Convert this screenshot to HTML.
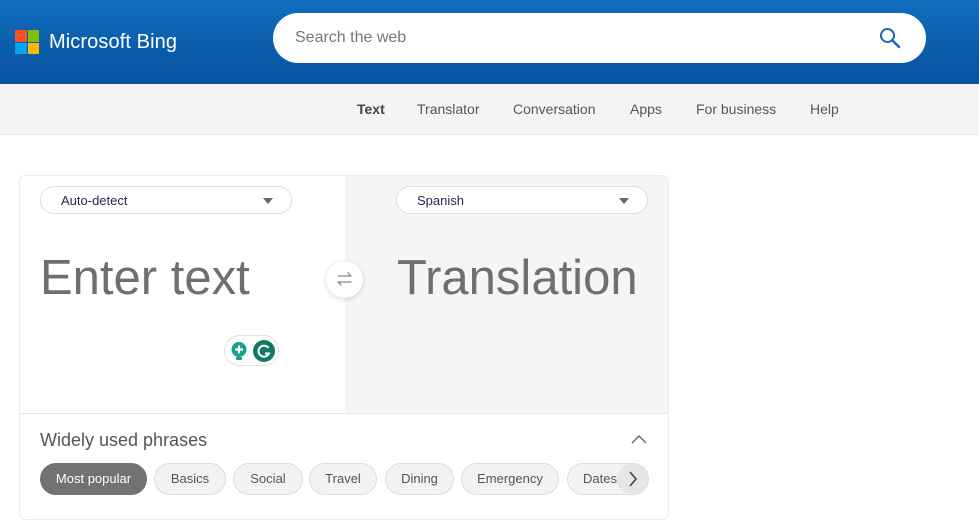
<!DOCTYPE html>
<html><head><style>
*{margin:0;padding:0;box-sizing:border-box}
body{width:979px;height:514px;overflow:hidden;background:#fff;font-family:"Liberation Sans",Arial,sans-serif;position:relative}
.hdr{position:absolute;left:0;top:0;width:979px;height:84px;background:linear-gradient(#106ebe,#0a5aa8 70%,#0553a0)}
.logo{position:absolute;left:15px;top:30px;width:24px;height:24px}
.logo i{position:absolute;width:11.5px;height:11.5px}
.brand{position:absolute;left:49px;top:31px;color:#fff;font-size:20px;letter-spacing:0.1px}
.search{position:absolute;left:273px;top:13px;width:653px;height:50px;background:#fff;border-radius:25px}
.search span{position:absolute;left:22px;top:16px;font-size:16px;color:#777}
.nav{position:absolute;left:0;top:84px;width:979px;height:51px;background:#f4f4f4;border-bottom:1px solid #e2e2e2}
.nav span{position:absolute;top:17px;font-size:14px;color:#555}
.card{position:absolute;left:19px;top:175px;width:650px;height:345px;border:1px solid #ececec;border-radius:6px;background:#fff;overflow:hidden}
.right{position:absolute;left:325px;top:0;width:325px;height:237px;background:#f5f5f5}
.line{position:absolute;left:0;top:237px;width:650px;height:1px;background:#e8e8e8}
.sel{position:absolute;top:10px;width:252px;height:28px;border:1px solid #ddd;border-radius:14px;background:#fff;font-size:13px;color:#2b2454}
.sel span{position:absolute;left:20px;top:6px}
.sel b{position:absolute;right:18px;top:11px;border-left:5px solid transparent;border-right:5px solid transparent;border-top:6px solid #666}
.big{position:absolute;top:74px;font-size:49px;color:#6f6f6f}
.swap{position:absolute;left:306px;top:85px;width:37px;height:37px;border-radius:50%;background:#fff;box-shadow:0 1px 4px rgba(0,0,0,.18)}
.gram{position:absolute;left:204px;top:159px;width:55px;height:31px;border:1px solid #e2e2e2;border-radius:16px;background:#fff}
.chip{position:absolute;top:287px;height:32px;border:1px solid #ddd;border-radius:16px;background:#f2f2f2;font-size:13px;color:#555;text-align:center;line-height:30px}
</style></head><body>
<div class="hdr">
 <div class="logo"><i style="left:0;top:0;background:#f35325"></i><i style="left:12.5px;top:0;background:#81bc06"></i><i style="left:0;top:12.5px;background:#05a6f0"></i><i style="left:12.5px;top:12.5px;background:#ffba08"></i></div>
 <div class="brand">Microsoft Bing</div>
 <div class="search"><span>Search the web</span>
  <svg style="position:absolute;left:606px;top:14px" width="22" height="22" viewBox="0 0 22 22"><circle cx="8.5" cy="8.5" r="6.5" fill="none" stroke="#1a64b8" stroke-width="2"/><path d="M13.5 13.5L20 20" stroke="#1a64b8" stroke-width="2.4" stroke-linecap="round"/></svg>
 </div>
</div>
<div class="nav">
 <span style="left:357px;font-weight:bold;color:#444">Text</span>
 <span style="left:417px">Translator</span>
 <span style="left:513px">Conversation</span>
 <span style="left:630px">Apps</span>
 <span style="left:696px">For business</span>
 <span style="left:810px">Help</span>
</div>
<div class="card">
 <div class="right"></div>
 <div class="line"></div>
 <div class="sel" style="left:20px"><span>Auto-detect</span><b></b></div>
 <div class="sel" style="left:376px"><span>Spanish</span><b></b></div>
 <div class="big" style="left:20px">Enter text</div>
 <div class="big" style="left:377px">Translation</div>
 <div class="swap"><svg width="37" height="37" viewBox="0 0 37 37"><path d="M12 15h13M22 12l3 3M25 21H12M15 24l-3-3" stroke="#888" stroke-width="1.3" fill="none" stroke-linecap="round"/></svg></div>
 <div class="gram">
  <svg style="position:absolute;left:6px;top:6px" width="18" height="19" viewBox="0 0 18 19"><circle cx="8" cy="7.5" r="7.5" fill="#15a087"/><rect x="5" y="15" width="6" height="3" rx="1" fill="#15a087"/><path d="M8 3.5v8M4 7.5h8" stroke="#fff" stroke-width="2.2"/></svg>
  <svg style="position:absolute;left:28px;top:4px" width="22" height="22" viewBox="0 0 22 22"><circle cx="11" cy="11" r="11" fill="#0f7a63"/><path d="M15.5 8A5.5 5.5 0 1 0 16 13.5H12" stroke="#fff" stroke-width="2" fill="none"/></svg>
 </div>
 <div style="position:absolute;left:20px;top:254px;font-size:18px;color:#555">Widely used phrases</div>
 <svg style="position:absolute;left:610px;top:257px" width="18" height="12" viewBox="0 0 18 12"><path d="M2 10l7-7 7 7" stroke="#666" stroke-width="1.4" fill="none"/></svg>
 <div class="chip" style="left:20px;width:107px;background:#727272;color:#fff;border-color:#727272">Most popular</div>
 <div class="chip" style="left:134px;width:72px">Basics</div>
 <div class="chip" style="left:213px;width:70px">Social</div>
 <div class="chip" style="left:289px;width:68px">Travel</div>
 <div class="chip" style="left:365px;width:69px">Dining</div>
 <div class="chip" style="left:441px;width:98px">Emergency</div>
 <div class="chip" style="left:547px;width:82px;text-align:left;padding-left:15px">Dates</div>
 <div style="position:absolute;left:597px;top:288px;width:31px;height:30px;border-radius:15px;background:#e6e6e6"><svg width="31" height="30" viewBox="0 0 31 30"><path d="M13 8l6 7-6 7" stroke="#444" stroke-width="1.6" fill="none"/></svg></div>
</div>
</body></html>
